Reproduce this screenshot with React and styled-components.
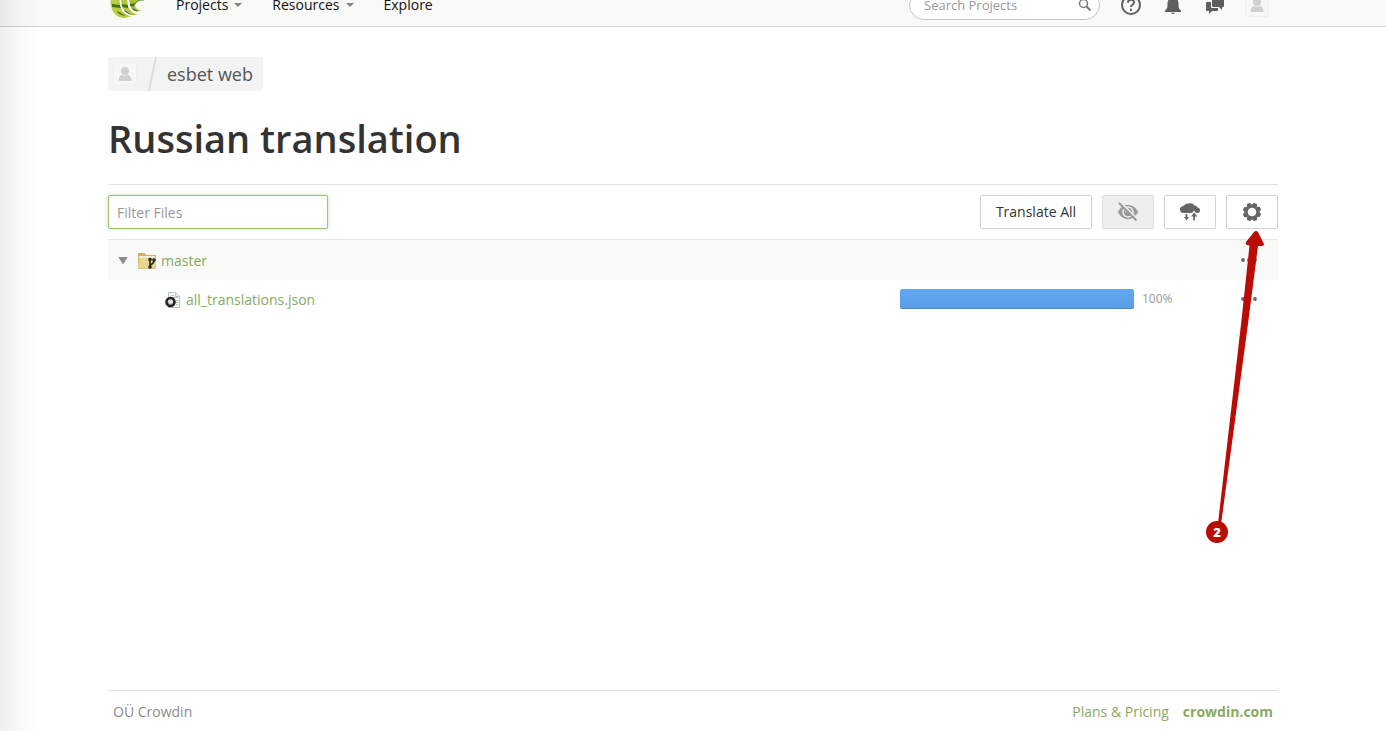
import React from "react";
import styled, { createGlobalStyle, css } from "styled-components";

const GlobalStyle = createGlobalStyle`
  * { box-sizing: border-box; }
  html, body { margin: 0; background: #fff; }
  body {
    font-family: "Open Sans", "Noto Sans", sans-serif;
    font-size: 14px;
    line-height: 20px;
    color: #333;
    overflow: hidden;
  }
  button, input { font: inherit; }
  a { color: #87aa60; text-decoration: none; }
`;

const Page = styled.div`
  display: flex;
  flex-direction: column;
  height: 100vh;
`;

const EdgeShade = styled.div`
  position: fixed;
  inset: 0 auto 0 0;
  width: 40px;
  background: linear-gradient(to right, rgba(0, 0, 0, 0.065), rgba(0, 0, 0, 0.02) 50%, rgba(0, 0, 0, 0));
  pointer-events: none;
`;

const Container = styled.div`
  width: 100%;
  max-width: 1170px;
  margin: 0 auto;
`;

const Header = styled.header`
  flex: none;
  height: 43px;
  margin-top: -16px;
  background: #f9f9f7;
  border-bottom: 1px solid #d3d3d1;
`;

const HeaderBar = styled(Container)`
  display: flex;
  align-items: center;
  height: 100%;
  padding-right: 9px;
`;

const LogoLink = styled.a`
  display: flex;
  width: 68px;
`;

const Nav = styled.nav`
  display: flex;
  gap: 30px;
  flex: 1;
`;

const NavItem = styled.a`
  display: flex;
  align-items: center;
  gap: 6px;
  color: #111;
`;

const Caret = styled.span`
  border: 4px solid transparent;
  border-top-color: #858585;
  border-bottom: 0;
`;

const SearchBox = styled.label`
  display: flex;
  align-items: center;
  width: 191px;
  height: 30px;
  padding: 0 7px 0 14px;
  background: #fff;
  border: 1px solid #c6c6c6;
  border-radius: 15px;
`;

const SearchInput = styled.input`
  flex: 1;
  min-width: 0;
  padding: 0;
  border: 0;
  outline: 0;
  background: none;
  font-size: 13px;
  &::placeholder { color: #999; opacity: 1; }
`;

const HeaderIcons = styled.div`
  display: flex;
  gap: 18px;
  margin-left: 19px;
`;

const IconButton = styled.button`
  display: flex;
  align-items: center;
  justify-content: center;
  width: 24px;
  height: 24px;
  padding: 0;
  border: 0;
  background: none;
  color: #5e5e5e;
`;

const Main = styled.main`
  flex: 1;
  padding-top: 30px;
`;

const Crumbs = styled.nav`
  display: inline-flex;
  align-items: center;
  height: 34px;
  padding: 0 10px 0 5px;
  background: #f3f3f3;
  border-radius: 2px;
`;

const CrumbLink = styled.a`
  color: #555;
  font-size: 18px;
  line-height: 34px;
  display: flex;
`;

const Title = styled.h1`
  margin: 20px 0 19px;
  font-size: 38px;
  line-height: 54px;
  font-weight: 600;
  color: #333;
`;

const Toolbar = styled.div`
  display: flex;
  align-items: center;
  gap: 10px;
  padding: 10px 0;
  border-top: 1px solid #e2e2e2;
`;

const FilterInput = styled.input`
  width: 220px;
  height: 34px;
  margin-right: auto;
  padding: 0 8px;
  border: 1px solid #9bc271;
  border-radius: 2px;
  outline: 0;
  box-shadow: 0 0 4px rgba(155, 194, 113, 0.5);
  &::placeholder { color: #999; opacity: 1; }
`;

const ToolButton = styled.button`
  display: flex;
  align-items: center;
  justify-content: center;
  width: ${(p) => (p.$wide ? "112px" : "52px")};
  height: 34px;
  padding: 0;
  border: 1px solid #d2d2d2;
  border-radius: 2px;
  background: #fff;
  color: ${(p) => (p.$wide ? "#333" : "#666")};
  ${(p) =>
    p.$muted &&
    css`
      background: #eeeeed;
      border-color: #dededd;
      color: #999;
    `}
`;

const Anchor = styled.div`
  position: relative;
`;

const Pointer = styled.svg`
  position: absolute;
  top: 34px;
  left: -26px;
  z-index: 2;
  pointer-events: none;
`;

const Files = styled.table`
  width: 100%;
  border-collapse: collapse;
  table-layout: fixed;
`;

const FileRow = styled.tr`
  height: 38px;
  ${(p) =>
    p.$branch &&
    css`
      height: 41px;
      background: #f9f9f7;
      box-shadow: inset 0 1px #e6e6e4;
    `}
`;

const Cell = styled.td`
  width: ${(p) => p.$width || "auto"};
  padding: 0;
`;

const FileName = styled.div`
  display: flex;
  align-items: center;
  gap: 5px;
  padding-top: 2px;
  padding-left: ${(p) => (p.$nested ? "57px" : "10px")};
`;

const Toggle = styled.button`
  width: 10px;
  height: 8px;
  padding: 0;
  margin-right: 5px;
  border: 0;
  background: #8a8a8a;
  clip-path: polygon(0 0, 100% 0, 50% 100%);
`;

const Progress = styled.div`
  display: flex;
  align-items: center;
  gap: 8px;
  color: #999;
  font-size: 12px;
`;

const Bar = styled.div`
  width: 234px;
  height: 20px;
  border-radius: 2px;
  background: linear-gradient(#62a7f5, #5a9ee4);
  border-bottom: 1px solid #4587ca;
`;

const Footer = styled.footer`
  flex: none;
`;

const FooterBar = styled(Container)`
  display: flex;
  gap: 14px;
  padding: 11px 5px 9px;
  border-top: 1px solid #e2e2e2;
  color: #8c8c8c;
`;

const Company = styled.span`
  flex: 1;
`;

const StrongLink = styled.a`
  font-weight: 700;
`;

function Logo() {
  return (
    <svg width="40" height="30" viewBox="0 0 40 30">
      <path d="M3 5C1 17 5 28 17 28L24 26C14 25 11 18 12 5z" fill="#b9cd45" />
      <path d="M4 14l8 1 1 3-9-1zM9 21c3 1 5 3 9 5l-5-1c-2-1-3-2-4-4z" fill="#44701e" />
      <path d="M13 5C11 17 16 27 27 25l3-1C21 23 18 16 20 5z" fill="#b0c93c" />
      <path d="M13 14l7 1v3l-6-1zM15 20c3 0 5 3 9 5-4 0-7-1-9-5z" fill="#44701e" />
      <path d="M21 5C19 16 24 24 34 20 28 20 25 16 29 12c2-2 6-2 8-3V5z" fill="#a5c436" />
      <path d="M22 14l5-1-1 3-4 1zM24 18c2 0 4 3 7 3-3 1-6 0-7-3z" fill="#44701e" />
      <path d="M12.500 5c-1 12 3 20 13 21M20.500 5c-1 11 2 17 10 18.500" fill="none" stroke="#f9f9f7" strokeWidth="1.500" />
      <path d="M27 14c1-3 4-4 9-4" fill="none" stroke="#5f8f2c" />
    </svg>
  );
}

function Avatar() {
  return (
    <svg width="24" height="24" viewBox="0 0 24 24">
      <rect x="0.5" y="0.5" width="23" height="23" rx="2" fill="#f7f7f7" stroke="#efefef" />
      <circle cx="12" cy="9" r="4" fill="#d0d0d0" />
      <path d="M5.500 19c0-4 2-6 4-6 1.500 1 3.500 1 5 0 2 0 4 2 4 6z" fill="#d0d0d0" />
    </svg>
  );
}

function SearchIcon() {
  return (
    <svg width="14" height="14" viewBox="0 0 14 14" fill="none" stroke="#777">
      <circle cx="5.500" cy="5.500" r="4" strokeWidth="1.500" />
      <path d="M8.500 8.500l4 4" strokeWidth="2" />
    </svg>
  );
}

function HelpIcon() {
  return (
    <svg width="22" height="22" viewBox="0 0 22 22" fill="none" stroke="currentColor" strokeWidth="2">
      <circle cx="11" cy="11" r="9" />
      <path d="M8 8.700c0-4 6-4 6-.3 0 2.300-3 2.300-3 4.600" />
      <path d="M11 14.800v2.200" />
    </svg>
  );
}

function BellIcon() {
  return (
    <svg width="18" height="20" viewBox="0 0 18 20" fill="currentColor">
      <path d="M9 1c1 0 1.500.7 1.500 1.600C13.500 3.500 14.500 6 14.500 9c0 4 .5 5 2.500 6.500V17H1v-1.500C3 14 3.500 13 3.500 9c0-3 1-5.500 4-6.400C7.500 1.700 8 1 9 1zM7 17.700h4c-.5 1.700-3.500 1.700-4 0z" />
    </svg>
  );
}

function ChatIcon() {
  return (
    <svg width="20" height="20" viewBox="0 0 20 20" fill="currentColor">
      <path d="M8 2h10q1 0 1 1v8q0 1-1 1h-1v3l-3-3H8q-1 0-1-1V3q0-1 1-1z" />
      <path d="M2 7h4v5q0 1 1 1h6v2q0 1-1 1H7l-3 3v-3H2q-1 0-1-1V8q0-1 1-1z" />
    </svg>
  );
}

function HiddenIcon() {
  return (
    <svg width="22" height="20" viewBox="0 0 22 20" fill="none">
      <path d="M1 10C5 0.500 17 0.500 21 10 17 19.500 5 19.500 1 10z" fill="currentColor" />
      <circle cx="11" cy="10" r="5" stroke="#eeeeed" strokeWidth="1.500" />
      <path d="M8.500 10a2.500 2.500 0 0 1 2.500-2.500" stroke="#eeeeed" strokeWidth="1.200" />
      <path d="M3.500 0.500L21 17.500" stroke="#eeeeed" strokeWidth="2" />
      <path d="M2 1L19.500 18.500" stroke="currentColor" strokeWidth="2" />
    </svg>
  );
}

function SyncIcon() {
  return (
    <svg width="20" height="18" viewBox="0 0 20 18" fill="currentColor">
      <path d="M3.500 10a3.500 3.500 0 0 1-.2-7C4.500 2 6 0 9 .6c2-.9 4.500-.3 5.300 1.900 2 0 3 .9 3.200 2C21 5 21 10 17 10h-1l-2-2.500L12 10z" />
      <path d="M5.500 11h1.800v3H9l-2.500 3.500L4 14h1.500zM13.200 17.500H15V13.500h2.500L14.200 9.500 11 13.500h2.200z" />
    </svg>
  );
}

function GearIcon() {
  const teeth = [0, 45, 90, 135, 180, 225, 270, 315];
  return (
    <svg width="20" height="20" viewBox="0 0 20 20">
      <circle cx="10" cy="10" r="5.900" fill="none" stroke="currentColor" strokeWidth="3.200" />
      {teeth.map((angle) => (
        <path key={angle} d="M7.400 3.500L8.200 0.800h3.600L12.600 3.500z" fill="currentColor" transform={`rotate(${angle + 22} 10 10)`} />
      ))}
    </svg>
  );
}

function FolderIcon() {
  return (
    <svg width="18" height="16" viewBox="0 0 18 16">
      <path d="M0 0h7l1 2h10v14H0z" fill="#c9b06c" />
      <path d="M1 3h16v2H1z" fill="#f3ecd2" />
      <path d="M0 15.500L1.500 5H18v10.500z" fill="#e8d690" />
      <g fill="none" stroke="#222" strokeWidth="1.600">
        <path d="M12 7v7M12 12c3-1 4-2 4-5" />
        <circle cx="12" cy="6.500" r="1" />
        <circle cx="16" cy="7" r="1" />
        <circle cx="12" cy="14" r="1" />
      </g>
    </svg>
  );
}

function JsonIcon() {
  return (
    <svg width="16" height="16" viewBox="0 0 16 16">
      <path d="M3.500 0.500h7l4 4v11h-11z" fill="#fafcfa" stroke="#b4c3bb" />
      <path d="M10.500 0.500v4h4M6 3.500h3M6 5.500h7M11 8.500h2M11 10.500h2M11 12.500h2" fill="none" stroke="#b4c3bb" />
      <circle cx="5.500" cy="10" r="4" fill="#ddd" stroke="#222" strokeWidth="2.600" />
      <path d="M3 10c0 3 4 3 5 1" fill="none" stroke="#777" strokeWidth="0.800" />
    </svg>
  );
}

function MoreIcon() {
  return (
    <svg width="16" height="4" viewBox="0 0 16 4" fill="#666">
      <circle cx="2" cy="2" r="1.900" />
      <circle cx="8" cy="2" r="1.900" />
      <circle cx="14" cy="2" r="1.900" />
    </svg>
  );
}

function StepPointer() {
  return (
    <Pointer width="72" height="318" viewBox="0 0 72 318" aria-label="Step 2">
      <path d="M17 303L41.500 91 49.500 16.500 47 16q-2-1-1-3L54 3q2-2 4 0l6 12q0 2-2 2l-4 0L48.500 91 20 303z" fill="#b90c05" />
      <circle cx="17" cy="303" r="11" fill="#b90c05" />
      <text x="17" y="308" textAnchor="middle" fontSize="13" fontWeight="800" fill="#fff">2</text>
    </Pointer>
  );
}

export default function App() {
  return (
    <Page>
      <GlobalStyle />
      <Header>
        <HeaderBar>
          <LogoLink href="#" aria-label="Crowdin"><Logo /></LogoLink>
          <Nav>
            <NavItem href="#">Projects <Caret /></NavItem>
            <NavItem href="#">Resources <Caret /></NavItem>
            <NavItem href="#">Explore</NavItem>
          </Nav>
          <SearchBox>
            <SearchInput type="text" placeholder="Search Projects" aria-label="Search Projects" />
            <SearchIcon />
          </SearchBox>
          <HeaderIcons>
            <IconButton aria-label="Help"><HelpIcon /></IconButton>
            <IconButton aria-label="Notifications"><BellIcon /></IconButton>
            <IconButton aria-label="Messages"><ChatIcon /></IconButton>
            <IconButton aria-label="Account"><Avatar /></IconButton>
          </HeaderIcons>
        </HeaderBar>
      </Header>

      <Main>
        <Container>
          <Crumbs>
            <CrumbLink href="#" aria-label="Owner">
              <IconButton as="span"><Avatar /></IconButton>
            </CrumbLink>
            <svg width="30" height="34" viewBox="0 0 30 34">
              <path d="M19 0L12 34" stroke="#dcdcdc" strokeWidth="2" />
            </svg>
            <CrumbLink href="#">esbet web</CrumbLink>
          </Crumbs>
          <Title>Russian translation</Title>
          <Toolbar>
            <FilterInput type="text" placeholder="Filter Files" aria-label="Filter Files" />
            <ToolButton $wide>Translate All</ToolButton>
            <ToolButton $muted aria-label="Show hidden files"><HiddenIcon /></ToolButton>
            <ToolButton aria-label="Synchronize"><SyncIcon /></ToolButton>
            <Anchor>
              <ToolButton aria-label="Settings"><GearIcon /></ToolButton>
              <StepPointer />
            </Anchor>
          </Toolbar>
          <Files>
            <tbody>
              <FileRow $branch>
                <Cell>
                  <FileName>
                    <Toggle aria-label="Collapse master" />
                    <FolderIcon />
                    <a href="#">master</a>
                  </FileName>
                </Cell>
                <Cell $width="337px" />
                <Cell $width="41px">
                  <IconButton aria-label="More actions for master"><MoreIcon /></IconButton>
                </Cell>
              </FileRow>
              <FileRow>
                <Cell>
                  <FileName $nested>
                    <JsonIcon />
                    <a href="#">all_translations.json</a>
                  </FileName>
                </Cell>
                <Cell>
                  <Progress><Bar />100%</Progress>
                </Cell>
                <Cell>
                  <IconButton aria-label="More actions for all_translations.json"><MoreIcon /></IconButton>
                </Cell>
              </FileRow>
            </tbody>
          </Files>
        </Container>
      </Main>

      <Footer>
        <FooterBar>
          <Company>OÜ Crowdin</Company>
          <a href="#">Plans &amp; Pricing</a>
          <StrongLink href="#">crowdin.com</StrongLink>
        </FooterBar>
      </Footer>
      <EdgeShade />
    </Page>
  );
}
